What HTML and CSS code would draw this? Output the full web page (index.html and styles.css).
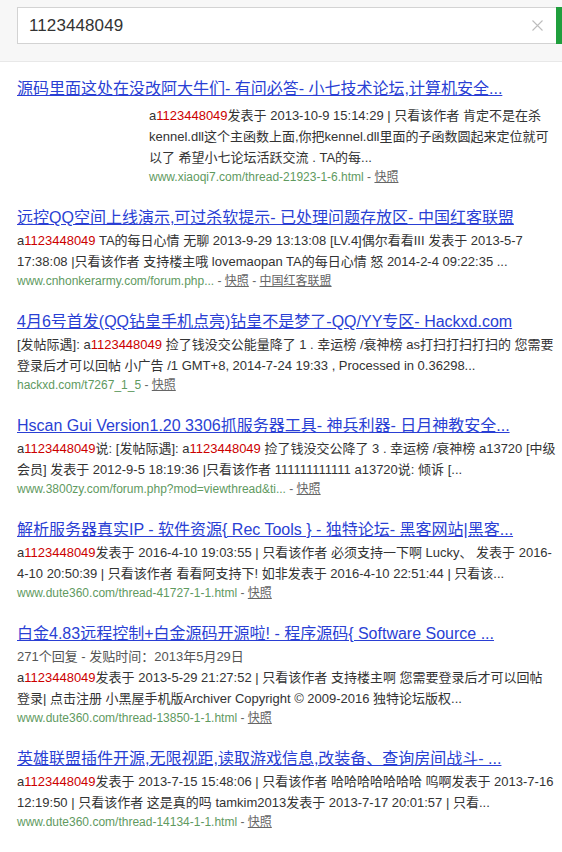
FILE: index.html
```html
<!DOCTYPE html>
<html lang="zh-CN">
<head>
<meta charset="utf-8">
<title>1123448049</title>
<link rel="stylesheet" href="styles.css">
</head>
<body>
<header class="top">
  <div class="search">
    <span class="query">1123448049</span>
    <svg class="clear" width="11" height="11" viewBox="0 0 11 11"><path d="M0.5 0.5 L10.5 10.5 M10.5 0.5 L0.5 10.5" stroke="#bdbdbd" stroke-width="1.1" fill="none"/></svg>
  </div>
  <div class="go"></div>
</header>
<main class="results">
  <section class="result">
    <a class="title" href="#">源码里面这处在没改阿大牛们- 有问必答- 小七技术论坛,计算机安全...</a>
    <div class="media">
      <div class="thumb"></div>
      <div class="media-body">
        <p class="abs">a<em>1123448049</em>发表于 2013-10-9 15:14:29 | 只看该作者 肯定不是在杀<br>kennel.dll这个主函数上面,你把kennel.dll里面的子函数圆起来定位就可<br>以了 希望小七论坛活跃交流 . TA的每...</p>
        <p class="url">www.xiaoqi7.com/thread-21923-1-6.html <span class="sep">-</span> <a href="#" class="snap">快照</a></p>
      </div>
    </div>
  </section>
  <section class="result">
    <a class="title" href="#">远控QQ空间上线演示,可过杀软提示- 已处理问题存放区- 中国红客联盟</a>
    <p class="abs">a<em>1123448049</em> TA的每日心情 无聊 2013-9-29 13:13:08 [LV.4]偶尔看看III 发表于 2013-5-7<br>17:38:08 |只看该作者 支持楼主哦 lovemaopan TA的每日心情 怒 2014-2-4 09:22:35 ...</p>
    <p class="url">www.cnhonkerarmy.com/forum.php... <span class="sep">-</span> <a href="#" class="snap">快照</a> <span class="sep">-</span> <a href="#" class="snap">中国红客联盟</a></p>
  </section>
  <section class="result">
    <a class="title" href="#">4月6号首发(QQ钻皇手机点亮)钻皇不是梦了-QQ/YY专区- Hackxd.com</a>
    <p class="abs">[发帖际遇]: a<em>1123448049</em> 捡了钱没交公能量降了 1 . 幸运榜 /衰神榜 as打扫打扫打扫的 您需要<br>登录后才可以回帖 小广告 /1 GMT+8, 2014-7-24 19:33 , Processed in 0.36298...</p>
    <p class="url">hackxd.com/t7267_1_5 <span class="sep">-</span> <a href="#" class="snap">快照</a></p>
  </section>
  <section class="result">
    <a class="title" href="#">Hscan Gui Version1.20 3306抓服务器工具- 神兵利器- 日月神教安全...</a>
    <p class="abs">a<em>1123448049</em>说: [发帖际遇]: a<em>1123448049</em> 捡了钱没交公降了 3 . 幸运榜 /衰神榜 a13720 [中级<br>会员] 发表于 2012-9-5 18:19:36 |只看该作者 111111111111 a13720说: 倾诉 [...</p>
    <p class="url">www.3800zy.com/forum.php?mod=viewthread&amp;ti... <span class="sep">-</span> <a href="#" class="snap">快照</a></p>
  </section>
  <section class="result">
    <a class="title" href="#">解析服务器真实IP - 软件资源{ Rec Tools } - 独特论坛- 黑客网站|黑客...</a>
    <p class="abs">a<em>1123448049</em>发表于 2016-4-10 19:03:55 | 只看该作者 必须支持一下啊 Lucky、 发表于 2016-<br>4-10 20:50:39 | 只看该作者 看看阿支持下! 如非发表于 2016-4-10 22:51:44 | 只看该...</p>
    <p class="url">www.dute360.com/thread-41727-1-1.html <span class="sep">-</span> <a href="#" class="snap">快照</a></p>
  </section>
  <section class="result">
    <a class="title" href="#">白金4.83远程控制+白金源码开源啦! - 程序源码{ Software Source ...</a>
    <p class="meta">271个回复 - 发贴时间：2013年5月29日</p>
    <p class="abs">a<em>1123448049</em>发表于 2013-5-29 21:27:52 | 只看该作者 支持楼主啊 您需要登录后才可以回帖<br>登录| 点击注册 小黑屋手机版Archiver Copyright © 2009-2016 独特论坛版权...</p>
    <p class="url">www.dute360.com/thread-13850-1-1.html <span class="sep">-</span> <a href="#" class="snap">快照</a></p>
  </section>
  <section class="result">
    <a class="title" href="#">英雄联盟插件开源,无限视距,读取游戏信息,改装备、查询房间战斗- ...</a>
    <p class="abs">a<em>1123448049</em>发表于 2013-7-15 15:48:06 | 只看该作者 哈哈哈哈哈哈哈 呜啊发表于 2013-7-16<br>12:19:50 | 只看该作者 这是真的吗 tamkim2013发表于 2013-7-17 20:01:57 | 只看...</p>
    <p class="url">www.dute360.com/thread-14134-1-1.html <span class="sep">-</span> <a href="#" class="snap">快照</a></p>
  </section>
</main>
</body>
</html>
```

FILE: styles.css
```css
* { box-sizing: border-box; }

body {
  margin: 0;
  background: #fff;
  font-family: "Liberation Sans", Arial, "Noto Sans CJK SC", sans-serif;
  color: #333;
  overflow: hidden;
}

.top {
  display: flex;
  align-items: flex-start;
  height: 62px;
  padding: 7px 0 0 17px;
  background: #f7f7f7;
  border-bottom: 1px solid #e8e8e8;
}

.search {
  flex: 1;
  height: 37px;
  display: flex;
  align-items: center;
  justify-content: space-between;
  padding: 0 13px 0 11px;
  background: #fff;
  border: 1px solid #d3d3d3;
  border-right: none;
}

.query {
  font-size: 17px;
  color: #333;
  letter-spacing: 0.1px;
}

.clear { display: block; }

.go {
  width: 6px;
  height: 37px;
  background: #1f9f3d;
}

.results {
  padding: 15px 0 0 17px;
}

.result {
  margin-bottom: 19px;
}

.title {
  display: block;
  font-size: 16px;
  line-height: 24px;
  color: #2a3fd4;
  text-decoration: underline;
  white-space: nowrap;
}

p { margin: 0; }

.abs {
  font-size: 13px;
  line-height: 21px;
  color: #333;
  white-space: nowrap;
}

.abs em {
  font-style: normal;
  color: #c00;
}

.meta {
  font-size: 13px;
  line-height: 21px;
  color: #555;
  white-space: nowrap;
}

.url {
  font-size: 12px;
  line-height: 19px;
  color: #5f9a5f;
  white-space: nowrap;
}

.url .sep { color: #666; }

.snap {
  color: #666;
  text-decoration: underline;
}

.media {
  display: flex;
  padding-top: 4px;
}

.thumb {
  width: 132px;
  flex: none;
}

.media-body { flex: 1; }
```
